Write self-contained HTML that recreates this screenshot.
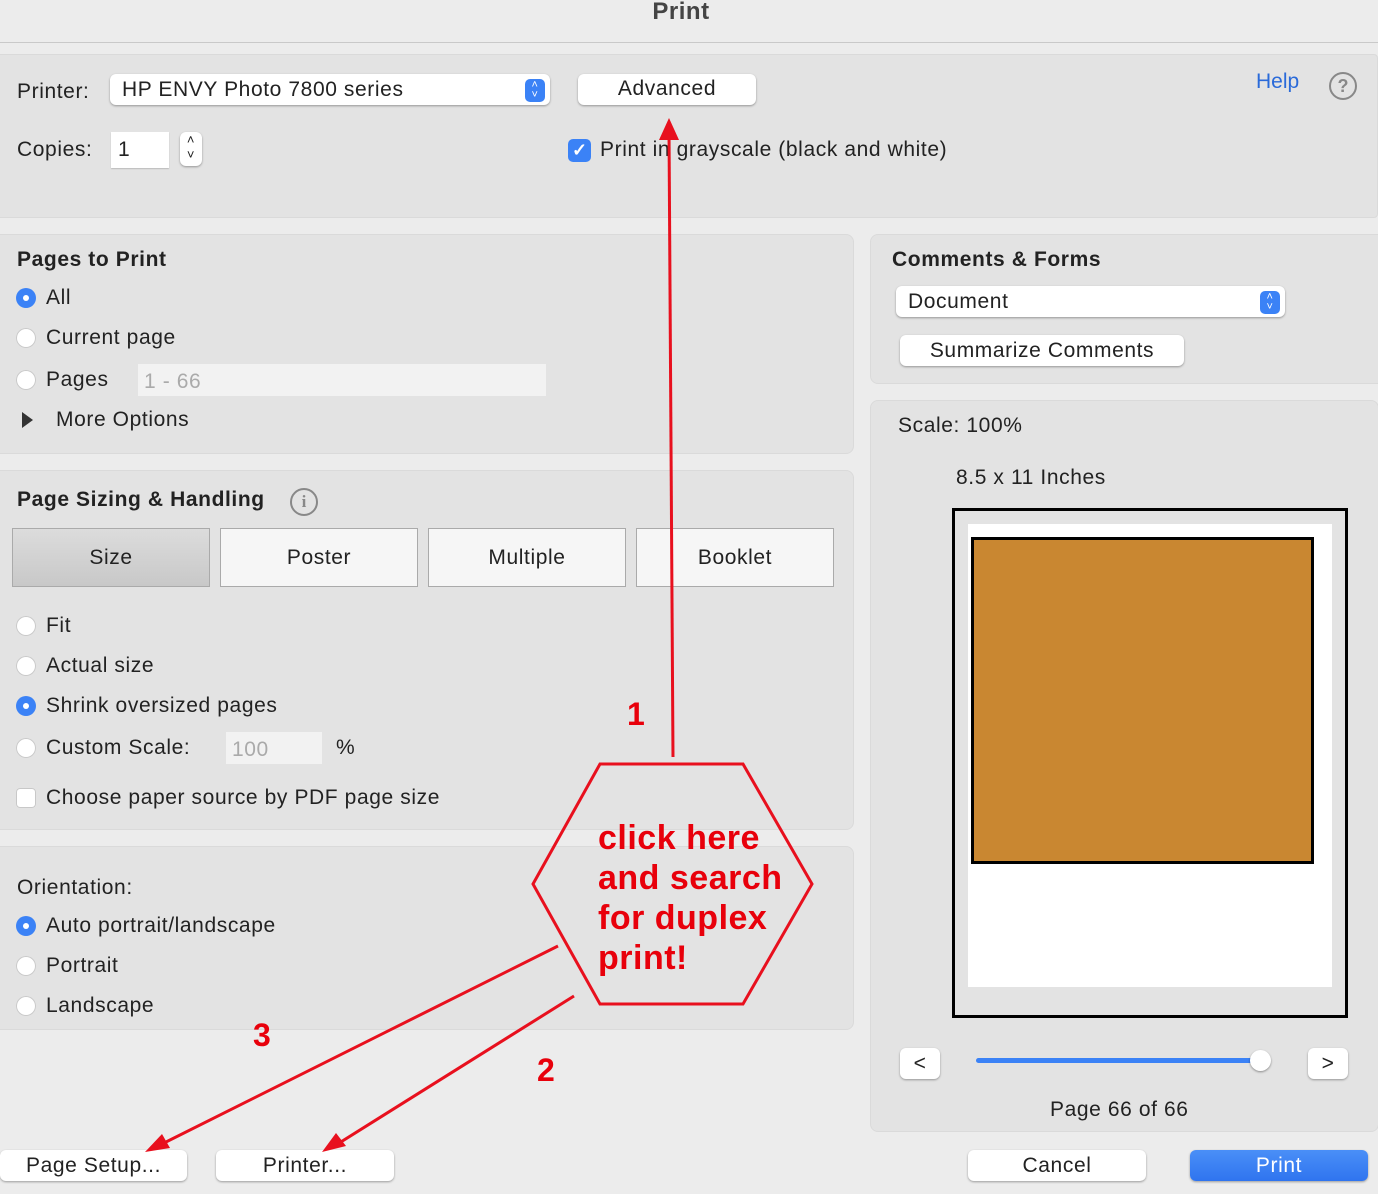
<!DOCTYPE html><html><head><style>
body{margin:0;width:1378px;height:1194px;background:#ececec;font-family:"Liberation Sans",sans-serif;color:#222;position:relative;overflow:hidden}
.a{position:absolute;white-space:nowrap}
.t{font-size:21px;letter-spacing:0.6px}
.pan{position:absolute;background:#e3e3e3;border:1px solid #dadada;border-radius:8px}
.btn{position:absolute;background:#fff;border-radius:6px;box-shadow:0 1px 2px rgba(0,0,0,.35);text-align:center;font-size:21px;letter-spacing:0.6px}
.rad{position:absolute;width:20px;height:20px;border-radius:50%;background:#fff;box-shadow:0 0 0 1px #c8c8c8 inset}
.rad.on{background:#3b82f6;box-shadow:none}
.rad.on::after{content:"";position:absolute;left:7px;top:7px;width:6px;height:6px;border-radius:50%;background:#fff}
.seg{position:absolute;top:528px;height:57px;width:196px;background:#f6f6f6;border:1px solid #aaa;text-align:center;line-height:57px;font-size:21px;letter-spacing:0.6px}
.red{color:#e8000b;font-weight:bold;letter-spacing:0.5px}
</style></head><body>
<div class="a" style="left:-8px;top:0;width:1378px;text-align:center;font-size:24px;font-weight:bold;color:#444;top:-2px;letter-spacing:0.5px">Print</div>
<div class="a" style="left:0;top:42px;width:1378px;height:1px;background:#c9c9c9"></div>
<div class="pan" style="left:-8px;top:54px;width:1384px;height:162px;border-radius:4px"></div>
<div class="a t" style="left:17px;top:80px">Printer:</div>
<div class="btn" style="left:110px;top:74px;width:440px;height:31px;text-align:left"><span style="position:absolute;left:12px;top:4px">HP ENVY Photo 7800 series</span><span style="position:absolute;right:5px;top:5px;width:20px;height:22px;background:#3b82f6;border-radius:5px;color:#fff;font-size:11px;line-height:10px;text-align:center;padding-top:1px">˄<br>˅</span></div>
<div class="btn" style="left:578px;top:74px;width:178px;height:31px;line-height:29px">Advanced</div>
<div class="a" style="left:1256px;top:70px;font-size:21px;color:#2a6ad9;height:22px;overflow:hidden">Help</div>
<div class="a" style="left:1329px;top:72px;width:24px;height:24px;border:2px solid #888;border-radius:50%;text-align:center;font-size:18px;line-height:24px;color:#888;font-weight:bold">?</div>
<div class="a t" style="left:17px;top:138px">Copies:</div>
<div class="a" style="left:111px;top:132px;width:58px;height:36px;background:#fff;box-shadow:0 1px 1px #bbb"><span class="t" style="position:absolute;left:7px;top:6px">1</span></div>
<div class="btn" style="left:180px;top:132px;width:22px;height:34px;font-size:13px;line-height:15px">˄<br>˅</div>
<div class="a" style="left:568px;top:139px;width:23px;height:23px;background:#3b82f6;border-radius:5px;color:#fff;text-align:center;font-size:18px;line-height:23px;font-weight:bold">✓</div>
<div class="a t" style="left:600px;top:138px">Print in grayscale (black and white)</div>

<div class="pan" style="left:-8px;top:234px;width:860px;height:218px"></div>
<div class="a t" style="left:17px;top:248px;font-weight:bold">Pages to Print</div>
<div class="rad on" style="left:16px;top:288px"></div><div class="a t" style="left:46px;top:286px">All</div>
<div class="rad" style="left:16px;top:328px"></div><div class="a t" style="left:46px;top:326px">Current page</div>
<div class="rad" style="left:16px;top:370px"></div><div class="a t" style="left:46px;top:368px">Pages</div>
<div class="a" style="left:138px;top:364px;width:408px;height:32px;background:#f2f2f2"><span class="t" style="position:absolute;left:6px;top:6px;color:#aaa">1 - 66</span></div>
<div class="a" style="left:22px;top:412px;width:0;height:0;border-left:11px solid #333;border-top:8px solid transparent;border-bottom:8px solid transparent"></div>
<div class="a t" style="left:56px;top:408px">More Options</div>

<div class="pan" style="left:-8px;top:470px;width:860px;height:358px"></div>
<div class="a t" style="left:17px;top:488px;font-weight:bold">Page Sizing &amp; Handling</div>
<div class="a" style="left:290px;top:488px;width:24px;height:24px;border:2px solid #888;border-radius:50%;text-align:center;font-size:17px;line-height:24px;color:#888;font-family:'Liberation Serif',serif;font-weight:bold">i</div>
<div class="seg" style="left:12px;background:linear-gradient(#dcdcdc,#c8c8c8)">Size</div>
<div class="seg" style="left:220px">Poster</div>
<div class="seg" style="left:428px">Multiple</div>
<div class="seg" style="left:636px">Booklet</div>
<div class="rad" style="left:16px;top:616px"></div><div class="a t" style="left:46px;top:614px">Fit</div>
<div class="rad" style="left:16px;top:656px"></div><div class="a t" style="left:46px;top:654px">Actual size</div>
<div class="rad on" style="left:16px;top:696px"></div><div class="a t" style="left:46px;top:694px">Shrink oversized pages</div>
<div class="rad" style="left:16px;top:738px"></div><div class="a t" style="left:46px;top:736px">Custom Scale:</div>
<div class="a" style="left:226px;top:732px;width:96px;height:32px;background:#f2f2f2"><span class="t" style="position:absolute;left:6px;top:6px;color:#aaa">100</span></div>
<div class="a t" style="left:336px;top:736px">%</div>
<div class="a" style="left:16px;top:788px;width:20px;height:20px;background:#fff;border-radius:4px;box-shadow:0 0 0 1px #c8c8c8 inset"></div>
<div class="a t" style="left:46px;top:786px">Choose paper source by PDF page size</div>

<div class="pan" style="left:-8px;top:846px;width:860px;height:182px"></div>
<div class="a t" style="left:17px;top:876px">Orientation:</div>
<div class="rad on" style="left:16px;top:916px"></div><div class="a t" style="left:46px;top:914px">Auto portrait/landscape</div>
<div class="rad" style="left:16px;top:956px"></div><div class="a t" style="left:46px;top:954px">Portrait</div>
<div class="rad" style="left:16px;top:996px"></div><div class="a t" style="left:46px;top:994px">Landscape</div>

<div class="pan" style="left:870px;top:234px;width:520px;height:148px"></div>
<div class="a t" style="left:892px;top:248px;font-weight:bold">Comments &amp; Forms</div>
<div class="btn" style="left:896px;top:286px;width:389px;height:31px;text-align:left"><span style="position:absolute;left:12px;top:4px">Document</span><span style="position:absolute;right:5px;top:5px;width:20px;height:22px;background:#3b82f6;border-radius:5px;color:#fff;font-size:11px;line-height:10px;text-align:center;padding-top:1px">˄<br>˅</span></div>
<div class="btn" style="left:900px;top:335px;width:284px;height:31px;line-height:31px">Summarize Comments</div>

<div class="pan" style="left:870px;top:400px;width:507px;height:730px"></div>
<div class="a t" style="left:898px;top:414px">Scale: 100%</div>
<div class="a t" style="left:956px;top:466px">8.5 x 11 Inches</div>
<div class="a" style="left:952px;top:508px;width:390px;height:504px;border:3px solid #000;background:#e3e3e3"></div>
<div class="a" style="left:968px;top:524px;width:364px;height:463px;background:#fff"></div>
<div class="a" style="left:971px;top:537px;width:337px;height:321px;background:#c98731;border:3px solid #000"></div>
<div class="btn" style="left:900px;top:1048px;width:40px;height:31px;line-height:31px">&lt;</div>
<div class="btn" style="left:1308px;top:1048px;width:40px;height:31px;line-height:31px">&gt;</div>
<div class="a" style="left:976px;top:1058px;width:286px;height:5px;border-radius:3px;background:#3b82f6"></div>
<div class="a" style="left:1250px;top:1050px;width:21px;height:21px;border-radius:50%;background:#fff;box-shadow:0 1px 2px rgba(0,0,0,.4)"></div>
<div class="a t" style="left:1050px;top:1098px">Page 66 of 66</div>

<div class="btn" style="left:0;top:1150px;width:187px;height:31px;line-height:31px">Page Setup...</div>
<div class="btn" style="left:216px;top:1150px;width:178px;height:31px;line-height:31px">Printer...</div>
<div class="btn" style="left:968px;top:1150px;width:178px;height:31px;line-height:31px">Cancel</div>
<div class="btn" style="left:1190px;top:1150px;width:178px;height:31px;line-height:31px;background:linear-gradient(#4a8ff7,#2f74ef);color:#fff">Print</div>

<svg class="a" style="left:0;top:0" width="1378" height="1194">
<g stroke="#e8101e" stroke-width="3" fill="none">
<line x1="673" y1="757" x2="669" y2="130"/>
<polygon points="600,764 743,764 812,884 743,1004 600,1004 533,884"/>
<line x1="558" y1="946" x2="160" y2="1145"/>
<line x1="574" y1="996" x2="336" y2="1145"/>
</g>
<g fill="#e8101e">
<polygon points="669,118 659,140 679,140"/>
<polygon points="145,1152 162,1134 170,1148"/>
<polygon points="322,1152 336,1133 346,1146"/>
</g>
</svg>
<div class="a red" style="left:598px;top:818px;font-size:34px;line-height:40px">click here<br>and search<br>for duplex<br>print!</div>
<div class="a red" style="left:627px;top:696px;font-size:32px">1</div>
<div class="a red" style="left:537px;top:1052px;font-size:32px">2</div>
<div class="a red" style="left:253px;top:1017px;font-size:32px">3</div>
</body></html>
